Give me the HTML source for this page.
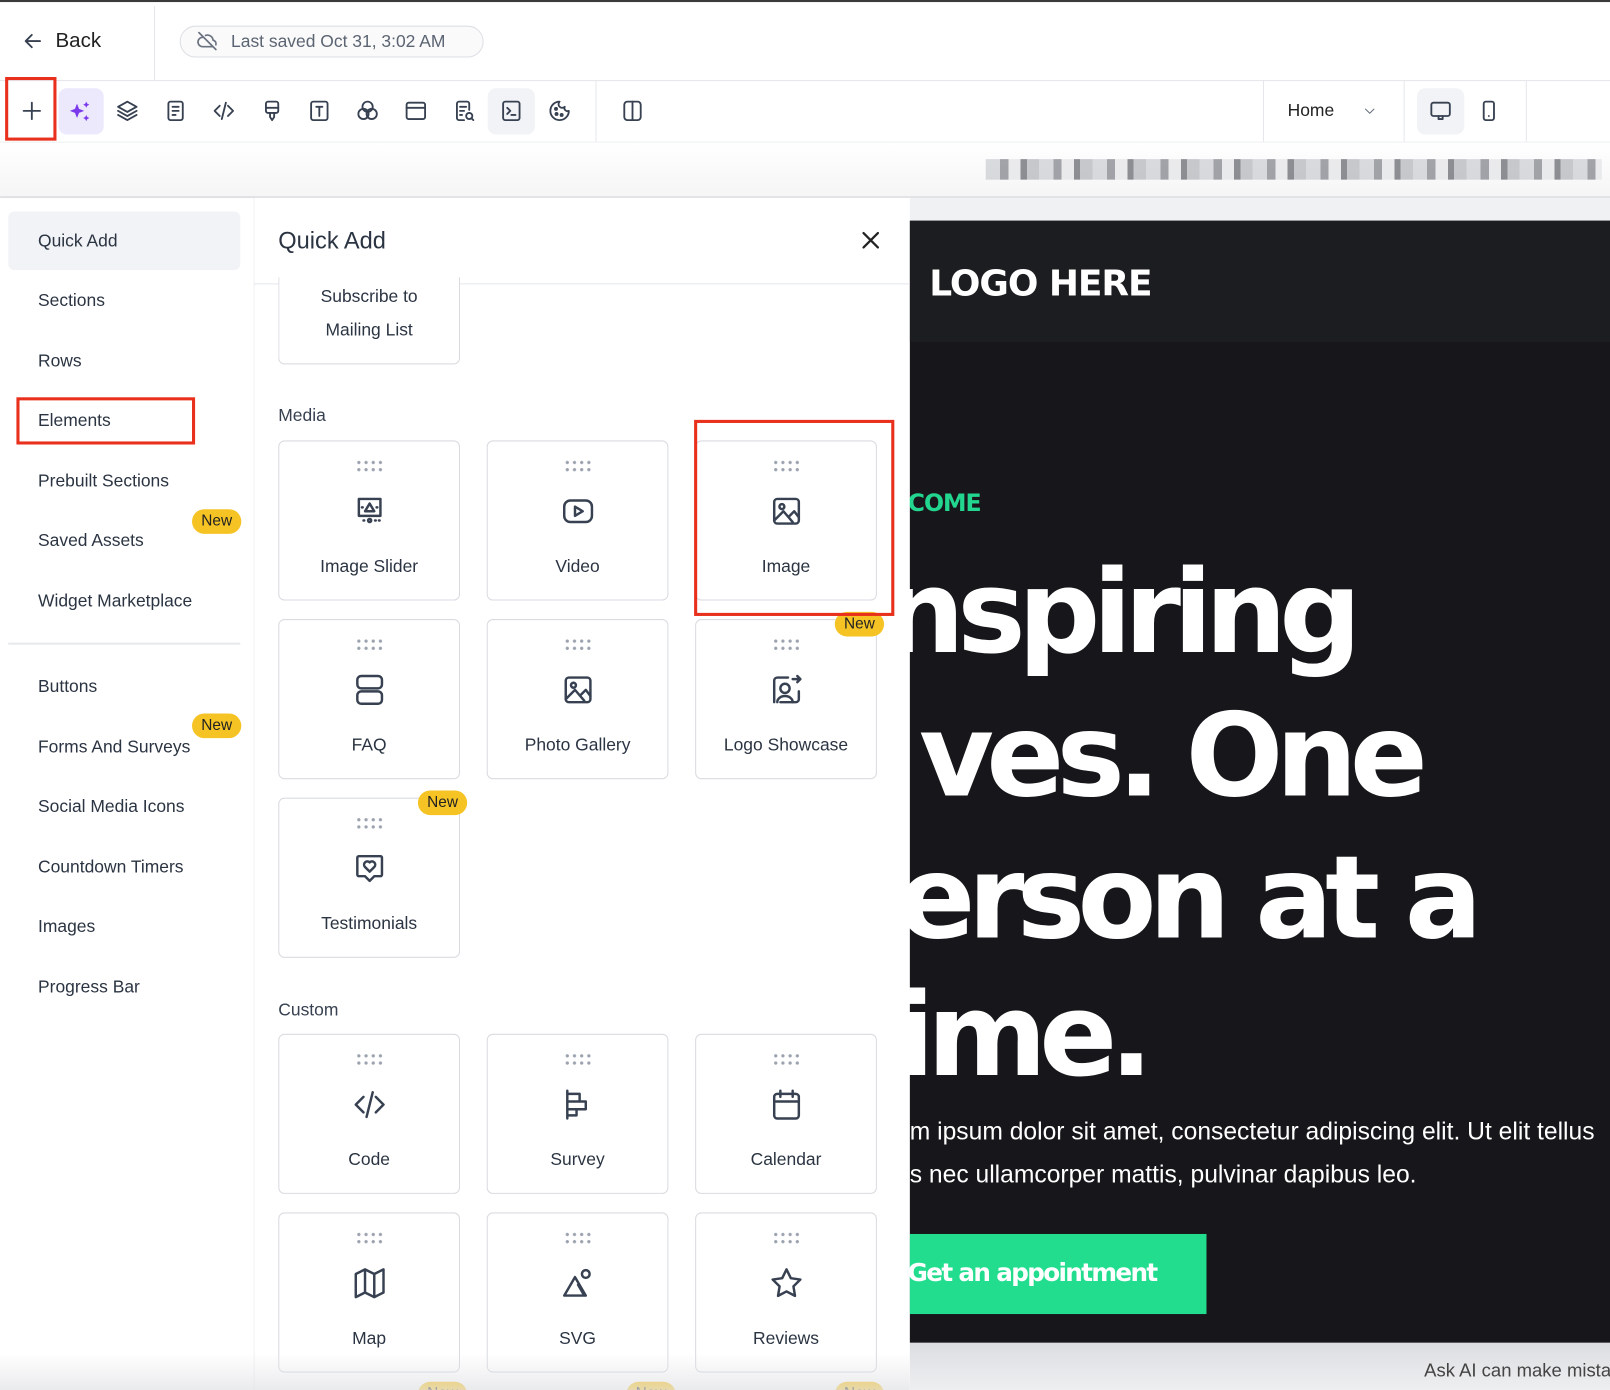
<!DOCTYPE html>
<html><head><meta charset="utf-8"><style>
*{margin:0;padding:0;box-sizing:border-box}
body{width:1610px;height:1390px;overflow:hidden;background:#fff;font-family:"Liberation Sans",sans-serif;color:#1f2937}
#w{position:absolute;left:0;top:0;width:1568px;height:1354px;transform:scale(1.02679,1.0266);transform-origin:0 0;overflow:hidden;background:#fff}
.a{position:absolute}
.ic{position:absolute;width:24px;height:24px;fill:none;stroke:#374151;stroke-width:1.8;stroke-linecap:round;stroke-linejoin:round}
.nav{position:absolute;left:37px;font-size:17px;color:#2b3442;transform:translateY(-50%)}
.badge{position:absolute;background:#f6c324;border-radius:12px;font-size:15px;color:#222;padding:2px 9px;height:24px;line-height:20px}
.card{position:absolute;width:177px;border:1px solid #d9dbe0;border-radius:6px;background:#fff}
.card .dots{position:absolute;left:74px;top:17px;width:28px;height:14px;background-image:radial-gradient(circle,#9ca3af 1.4px,transparent 1.8px);background-size:7px 7px}
.card .lb{position:absolute;left:0;right:0;top:112px;text-align:center;font-size:17px;color:#2b3442}
.card svg{left:70px;top:50px;width:36px;height:36px;stroke-width:1.6}
.lbl{position:absolute;left:271px;font-size:17px;color:#374151}
.hero{position:absolute;left:880px;color:#fff;font-weight:bold;font-size:112px;letter-spacing:-7.5px;white-space:nowrap;font-family:"DejaVu Sans",sans-serif}
</style></head><body><div id="w">
<div class="a" style="left:0;top:0;width:1568px;height:2px;background:#3a3a3a"></div>
<svg class="ic" style="left:20px;top:28px" viewBox="0 0 24 24"><path d="M19 12H5M11 6l-6 6 6 6"/></svg>
<div class="a" style="left:54px;top:29px;font-size:20px;color:#222">Back</div>
<div class="a" style="left:150px;top:6px;width:1px;height:72px;background:#e5e7eb"></div>
<div class="a" style="left:175px;top:25px;width:296px;height:31px;border:1px solid #dcdfe4;border-radius:16px;background:#fafafa"></div>
<svg class="ic" style="left:191px;top:29px;width:22px;height:22px;stroke:#6b7280" viewBox="0 0 24 24"><path d="M3 3l18 18M7 8a5 5 0 0 0 0 10h11M10 6a6 6 0 0 1 8 5 4 4 0 0 1 3 5"/></svg>
<div class="a" style="left:225px;top:31px;font-size:17px;color:#5b6472">Last saved Oct 31, 3:02 AM</div>
<div class="a" style="left:0;top:78px;width:1568px;height:1px;background:#e5e7eb"></div>
<div class="a" style="left:57px;top:86px;width:44px;height:45px;background:#ece9fd;border-radius:8px"></div>
<div class="a" style="left:475px;top:86px;width:46px;height:45px;background:#f1f3f6;border-radius:8px"></div>
<svg class="ic" style="left:19px;top:96px" viewBox="0 0 24 24"><path d="M12 4v16M4 12h16"/></svg>
<svg class="ic" style="left:66px;top:96px;fill:#7c3aed;stroke:none" viewBox="0 0 24 24"><path d="M9 5l2 5 5 2-5 2-2 5-2-5-5-2 5-2z M18 3l1 2 2 1-2 1-1 2-1-2-2-1 2-1z M18 16l1 2 2 1-2 1-1 2-1-2-2-1 2-1z"/></svg>
<svg class="ic" style="left:112px;top:96px" viewBox="0 0 24 24"><path d="M12 3l9 5-9 5-9-5z M3 12l9 5 9-5 M3 16l9 5 9-5"/></svg>
<svg class="ic" style="left:159px;top:96px" viewBox="0 0 24 24"><rect x="5" y="3" width="14" height="18" rx="2"/><path d="M9 8h6M9 12h6M9 16h3"/></svg>
<svg class="ic" style="left:206px;top:96px" viewBox="0 0 24 24"><path d="M8 7l-5 5 5 5M16 7l5 5-5 5M14 4l-4 16"/></svg>
<svg class="ic" style="left:253px;top:96px" viewBox="0 0 24 24"><rect x="6" y="3" width="12" height="11" rx="2"/><path d="M6 9h12M10 14v4l2 3 2-3v-4"/></svg>
<svg class="ic" style="left:299px;top:96px" viewBox="0 0 24 24"><rect x="4" y="3" width="16" height="18" rx="2"/><path d="M9 8h6M12 8v9"/></svg>
<svg class="ic" style="left:346px;top:96px" viewBox="0 0 24 24"><circle cx="12" cy="8" r="5"/><circle cx="8" cy="15" r="5"/><circle cx="16" cy="15" r="5"/></svg>
<svg class="ic" style="left:393px;top:96px" viewBox="0 0 24 24"><rect x="3" y="4" width="18" height="16" rx="2"/><path d="M3 9h18"/></svg>
<svg class="ic" style="left:440px;top:96px" viewBox="0 0 24 24"><path d="M17 11V5a2 2 0 0 0-2-2H7a2 2 0 0 0-2 2v14a2 2 0 0 0 2 2h5M8 8h6M8 12h4M8 16h2"/><circle cx="17" cy="17" r="3"/><path d="M19 19l2 2"/></svg>
<svg class="ic" style="left:486px;top:96px" viewBox="0 0 24 24"><rect x="4" y="3" width="16" height="18" rx="2"/><path d="M8 9l3 3-3 3M12 16h4"/></svg>
<svg class="ic" style="left:533px;top:96px" viewBox="0 0 24 24"><path d="M12 3a9 9 0 1 0 9 9 3 3 0 0 1-4-4 3 3 0 0 1-5-5z"/><circle cx="8.5" cy="10" r="1"/><circle cx="9" cy="15" r="1"/><circle cx="14" cy="16" r="1"/></svg>
<div class="a" style="left:580px;top:79px;width:1px;height:59px;background:#e5e7eb"></div>
<svg class="ic" style="left:604px;top:96px" viewBox="0 0 24 24"><rect x="4" y="3" width="16" height="18" rx="3"/><path d="M12 3v18"/></svg>
<div class="a" style="left:1230px;top:79px;width:1px;height:59px;background:#e5e7eb"></div>
<div class="a" style="left:1254px;top:98px;font-size:17px;color:#222">Home</div>
<svg class="ic" style="left:1327px;top:101px;width:14px;height:14px;stroke:#6b7280" viewBox="0 0 24 24"><path d="M5 9l7 7 7-7"/></svg>
<div class="a" style="left:1367px;top:79px;width:1px;height:59px;background:#e5e7eb"></div>
<div class="a" style="left:1380px;top:86px;width:46px;height:45px;background:#f1f3f6;border-radius:8px"></div>
<svg class="ic" style="left:1391px;top:96px" viewBox="0 0 24 24"><rect x="3" y="4" width="18" height="13" rx="2"/><path d="M10 17v3h4v-3"/></svg>
<svg class="ic" style="left:1438px;top:96px" viewBox="0 0 24 24"><rect x="7" y="3" width="10" height="18" rx="2"/><path d="M12 17h.01"/></svg>
<div class="a" style="left:1486px;top:79px;width:1px;height:59px;background:#e5e7eb"></div>
<div class="a" style="left:0;top:138px;width:1568px;height:1px;background:#eceef1"></div>
<div class="a" style="left:0;top:139px;width:1568px;height:53px;background:linear-gradient(#fff,#f5f5f6)"></div>
<div class="a" style="left:960px;top:155px;width:600px;height:20px;background:repeating-linear-gradient(90deg,#c9cbd0 0 14px,#7a7d84 14px 22px,#e2e3e6 22px 34px,#5c5f66 34px 40px,#b0b2b7 40px 52px);opacity:.7"></div>
<div class="a" style="left:0;top:191px;width:1568px;height:2px;background:#e1e3e6"></div>
<div class="a" style="left:886px;top:193px;width:682px;height:22px;background:#eff1f3"></div>
<div class="a" style="left:886px;top:215px;width:682px;height:1093px;background:#17171b"></div>
<div class="a" style="left:886px;top:215px;width:682px;height:118px;background:#1c1d20"></div>
<div class="a" style="left:905px;top:257px;font-size:35px;font-weight:bold;color:#fff;font-family:'DejaVu Sans',sans-serif;letter-spacing:-1px">LOGO HERE</div>
<div class="a" style="left:884px;top:478px;font-size:23px;font-weight:bold;color:#22d68f;font-family:'DejaVu Sans',sans-serif;letter-spacing:-1px">COME</div>
<div class="hero" style="left:860px;top:532px">nspiring</div>
<div class="hero" style="left:895px;top:672px">ves. One</div>
<div class="hero" style="left:874px;top:810px">erson at a</div>
<div class="hero" style="left:872px;top:944px">ime.</div>
<div class="a" style="left:886px;top:1089px;font-size:24px;color:#fff;white-space:nowrap">m ipsum dolor sit amet, consectetur adipiscing elit. Ut elit tellus</div>
<div class="a" style="left:886px;top:1131px;font-size:24px;color:#fff;white-space:nowrap">s nec ullamcorper mattis, pulvinar dapibus leo.</div>
<div class="a" style="left:886px;top:1202px;width:289px;height:78px;background:#23dd8f"></div>
<div class="a" style="left:884px;top:1226px;font-size:24px;font-weight:bold;color:#fff;font-family:'DejaVu Sans',sans-serif;letter-spacing:-1.6px">Get an appointment</div>
<div class="a" style="left:886px;top:1308px;width:682px;height:46px;background:linear-gradient(#dcdde0,#eeeff1)"></div>
<div class="a" style="left:1387px;top:1325px;font-size:18px;color:#444;white-space:nowrap">Ask AI can make mistakes</div>
<div class="a" style="left:0;top:193px;width:247px;height:1161px;background:#fff;box-shadow:2px 0 4px rgba(0,0,0,.04)"></div>
<div class="a" style="left:8px;top:206px;width:226px;height:57px;background:#f2f3f6;border-radius:6px"></div>
<div class="nav" style="top:235px">Quick Add</div>
<div class="nav" style="top:293px">Sections</div>
<div class="nav" style="top:352px">Rows</div>
<div class="nav" style="top:410px">Elements</div>
<div class="nav" style="top:469px">Prebuilt Sections</div>
<div class="nav" style="top:527px">Saved Assets</div>
<div class="nav" style="top:586px">Widget Marketplace</div>
<div class="a" style="left:8px;top:626px;width:226px;height:2px;background:#e8e9ec"></div>
<div class="nav" style="top:669px">Buttons</div>
<div class="nav" style="top:728px">Forms And Surveys</div>
<div class="nav" style="top:786px">Social Media Icons</div>
<div class="nav" style="top:845px">Countdown Timers</div>
<div class="nav" style="top:903px">Images</div>
<div class="nav" style="top:962px">Progress Bar</div>
<div class="badge" style="left:187px;top:496px">New</div>
<div class="badge" style="left:187px;top:695px">New</div>
<div class="a" style="left:247px;top:193px;width:639px;height:1161px;background:#fff;border-left:1px solid #f0f1f3"></div>
<div class="a" style="left:271px;top:221px;font-size:23px;color:#2b3442">Quick Add</div>
<svg class="ic" style="left:836px;top:222px;stroke:#222;stroke-width:2.2" viewBox="0 0 24 24"><path d="M5 5l14 14M19 5L5 19"/></svg>
<div class="a" style="left:247px;top:276px;width:639px;height:1px;background:#e5e7eb"></div>
<div class="card" style="left:271px;top:270px;height:85px;border-top:none;border-radius:0 0 6px 6px"><div style="position:absolute;left:0;right:0;top:2px;text-align:center;font-size:17px;line-height:33px;color:#2b3442">Subscribe to<br>Mailing List</div></div>
<div class="lbl" style="top:395px">Media</div>
<div class="card" style="left:271px;top:429px;height:156px"><div class="dots"></div><svg class="ic" viewBox="0 0 24 24"><rect x="5" y="4" width="14" height="11"/><path d="M9 12l3-5 3 5z M7 9.5h.5M16.5 9.5h.5"/><circle cx="12" cy="18" r="1"/><path d="M8 18h.5M15.5 18h.5M18 18h.5"/></svg><div class="lb">Image Slider</div></div>
<div class="card" style="left:474px;top:429px;height:156px"><div class="dots"></div><svg class="ic" viewBox="0 0 24 24"><rect x="3" y="5" width="18" height="14" rx="4"/><path d="M10 9l5 3-5 3z"/></svg><div class="lb">Video</div></div>
<div class="card" style="left:677px;top:429px;height:156px"><div class="dots"></div><svg class="ic" viewBox="0 0 24 24"><rect x="4" y="4" width="16" height="16" rx="2"/><circle cx="9" cy="9" r="1.6"/><path d="M4 18l6-6 6 7M14 15l3-3 3 4"/></svg><div class="lb">Image</div></div>
<div class="card" style="left:271px;top:603px;height:156px"><div class="dots"></div><svg class="ic" viewBox="0 0 24 24"><rect x="4" y="3" width="16" height="8" rx="2.5"/><rect x="4" y="13" width="16" height="8" rx="2.5"/></svg><div class="lb">FAQ</div></div>
<div class="card" style="left:474px;top:603px;height:156px"><div class="dots"></div><svg class="ic" viewBox="0 0 24 24"><rect x="4" y="4" width="16" height="16" rx="2"/><circle cx="9" cy="9" r="1.6"/><path d="M4 18l6-6 6 7M14 15l3-3 3 4"/></svg><div class="lb">Photo Gallery</div></div>
<div class="card" style="left:677px;top:603px;height:156px"><div class="dots"></div><svg class="ic" viewBox="0 0 24 24"><path d="M13 4H6a2 2 0 0 0-2 2v14M20 13v5a2 2 0 0 1-2 2H8M16 5h5M19 3l2 2-2 2"/><circle cx="11" cy="11" r="3"/><path d="M6 20a5 4 0 0 1 10 0"/></svg><div class="lb">Logo Showcase</div></div>
<div class="badge" style="left:813px;top:596px">New</div>
<div class="card" style="left:271px;top:777px;height:156px"><div class="dots"></div><svg class="ic" viewBox="0 0 24 24"><path d="M5 4h14a1 1 0 0 1 1 1v11a1 1 0 0 1-1 1h-4l-3 3-3-3H5a1 1 0 0 1-1-1V5a1 1 0 0 1 1-1z M12 14l-3-3a2 2 0 0 1 3-3 2 2 0 0 1 3 3z"/></svg><div class="lb">Testimonials</div></div>
<div class="badge" style="left:407px;top:770px">New</div>
<div class="lbl" style="top:974px">Custom</div>
<div class="card" style="left:271px;top:1007px;height:156px"><div class="dots"></div><svg class="ic" viewBox="0 0 24 24"><path d="M8 7l-5 5 5 5M16 7l5 5-5 5M14 4l-4 16"/></svg><div class="lb">Code</div></div>
<div class="card" style="left:474px;top:1007px;height:156px"><div class="dots"></div><svg class="ic" viewBox="0 0 24 24"><path d="M5 3v18M5 5h8v5H5M5 10h12v5H5M5 15h6v4H5"/></svg><div class="lb">Survey</div></div>
<div class="card" style="left:677px;top:1007px;height:156px"><div class="dots"></div><svg class="ic" viewBox="0 0 24 24"><rect x="4" y="5" width="16" height="16" rx="2"/><path d="M4 10h16M8 3v4M16 3v4"/></svg><div class="lb">Calendar</div></div>
<div class="card" style="left:271px;top:1181px;height:156px"><div class="dots"></div><svg class="ic" viewBox="0 0 24 24"><path d="M3 6l6-3 6 3 6-3v15l-6 3-6-3-6 3z M9 3v15M15 6v15"/></svg><div class="lb">Map</div></div>
<div class="card" style="left:474px;top:1181px;height:156px"><div class="dots"></div><svg class="ic" viewBox="0 0 24 24"><path d="M3 20l7-12 7 12z M12 13l4 7"/><circle cx="17" cy="6" r="2.5"/></svg><div class="lb">SVG</div></div>
<div class="card" style="left:677px;top:1181px;height:156px"><div class="dots"></div><svg class="ic" viewBox="0 0 24 24"><path d="M12 3l2.8 5.7 6.2.9-4.5 4.4 1 6.2L12 17.3 6.5 20.2l1-6.2L3 9.6l6.2-.9z"/></svg><div class="lb">Reviews</div></div>
<div class="badge" style="left:407px;top:1346px">New</div>
<div class="badge" style="left:610px;top:1346px">New</div>
<div class="badge" style="left:813px;top:1346px">New</div>
<div class="a" style="left:0;top:1318px;width:886px;height:36px;background:linear-gradient(rgba(255,255,255,0),rgba(225,226,229,.7))"></div>
<div class="a" style="left:5px;top:75px;width:50px;height:62px;border:3px solid #e8301c"></div>
<div class="a" style="left:16px;top:387px;width:174px;height:46px;border:3px solid #e8301c"></div>
<div class="a" style="left:676px;top:409px;width:195px;height:191px;border:3px solid #e8301c"></div>
</div></body></html>
